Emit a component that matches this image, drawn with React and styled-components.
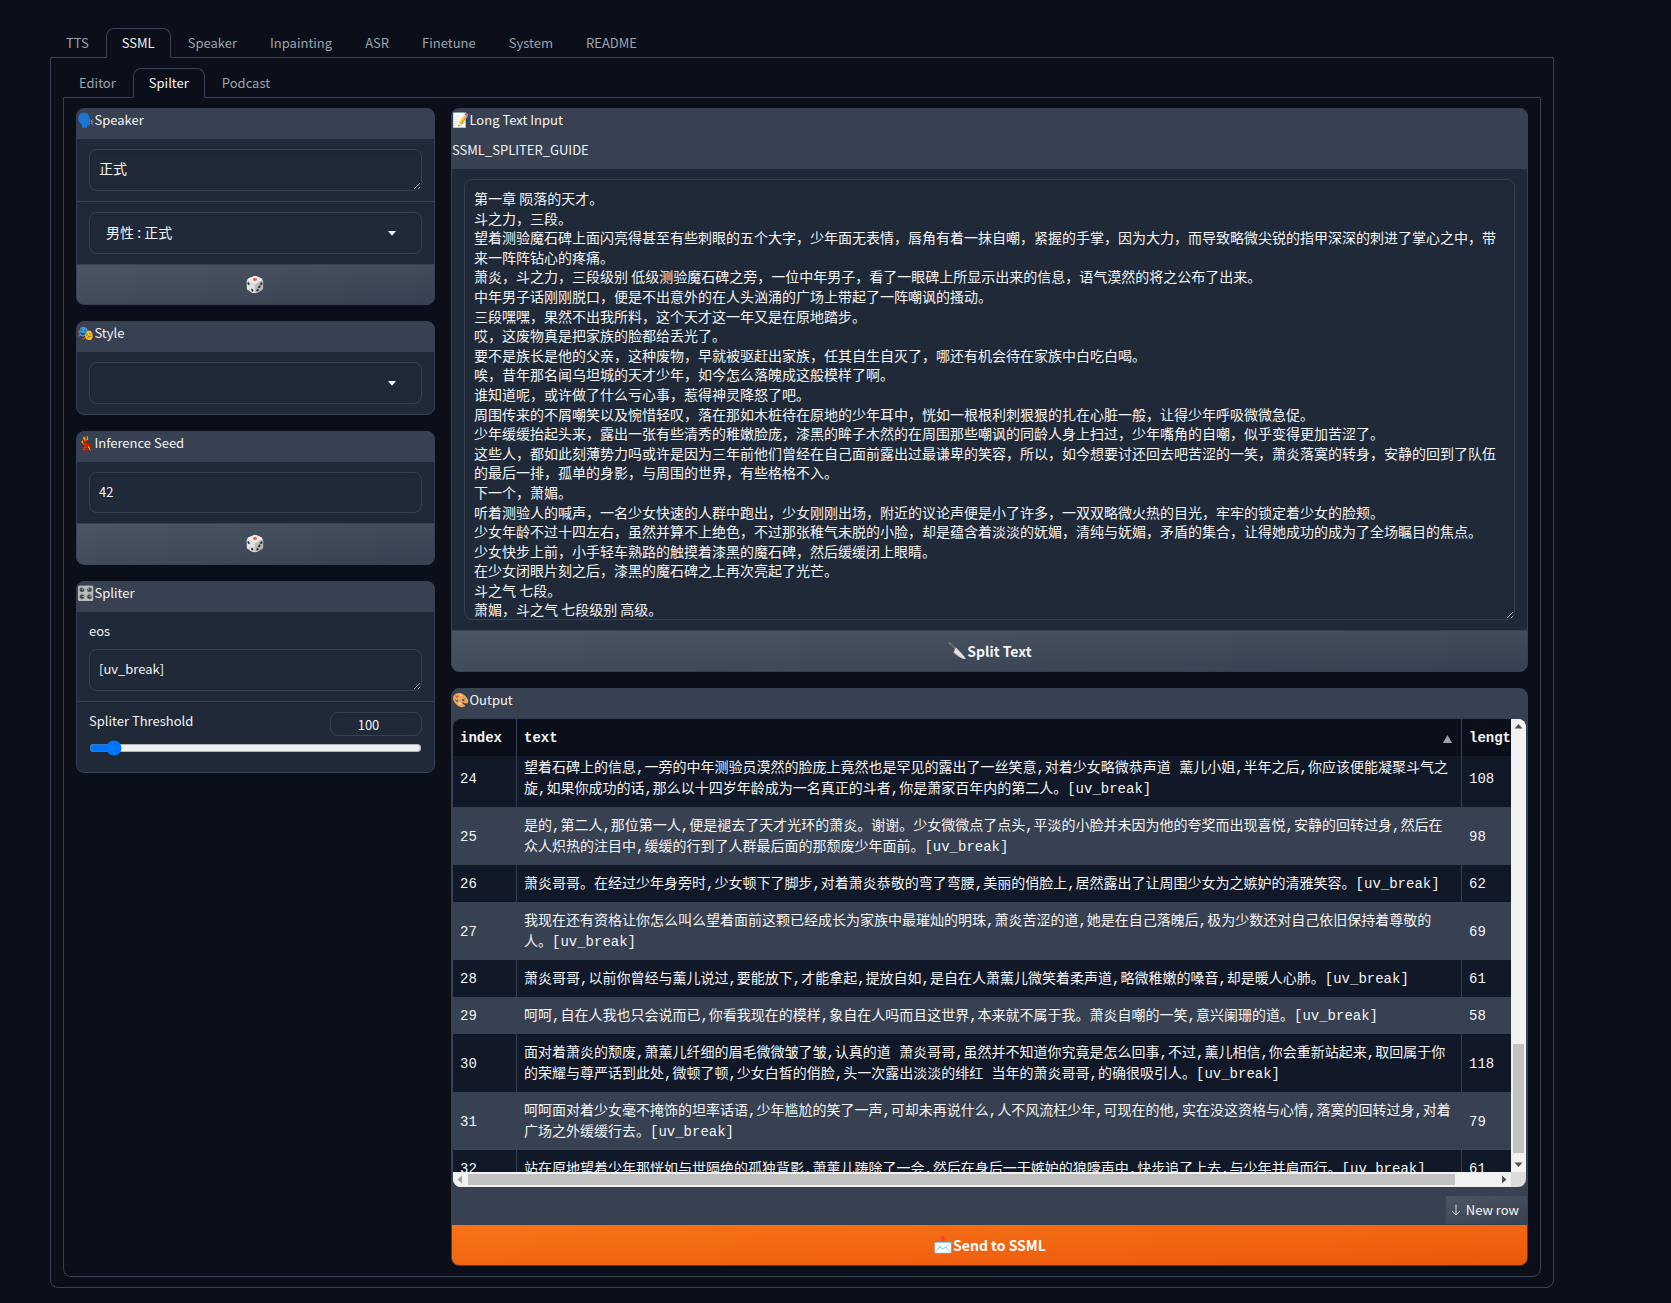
import React, { useLayoutEffect, useRef, useState } from "react";
import styled, { createGlobalStyle } from "styled-components";

const c = {
  page: "#0b0f19",
  block: "#1f2937",
  line: "#374151",
  text: "#f3f4f6",
  muted: "#9ca3af",
  rowDark: "#111827",
};

const sans = `"Noto Sans CJK SC", "Noto Sans", "Noto Color Emoji", sans-serif`;
const mono = `"Liberation Mono", "Noto Sans CJK SC", monospace`;

const GlobalStyle = createGlobalStyle`
  *, *::before, *::after { box-sizing: border-box; }
  body { margin: 0; background: ${c.page}; color: ${c.text}; font: 13px/20px ${sans}; }
  button, input, textarea, select { font: inherit; color: inherit; margin: 0; }
`;

const Page = styled.main`
  padding: 28px 117px 15px 50px;
`;

const TabList = styled.div`
  display: flex;
  gap: 1px;
  position: relative;
  z-index: 1;
  margin-bottom: -1px;
`;

const Tab = styled.button`
  height: 30px;
  padding: 0 15px;
  background: ${(p) => (p.$active ? c.page : "transparent")};
  border: 1px solid ${(p) => (p.$active ? c.line : "transparent")};
  border-bottom-color: ${(p) => (p.$active ? c.page : "transparent")};
  border-radius: 8px 8px 0 0;
  color: ${(p) => (p.$active ? c.text : c.muted)};
  line-height: 20px;
  white-space: nowrap;
  cursor: pointer;
`;

const TabPanel = styled.section`
  padding: 10px 12px;
  border: 1px solid ${c.line};
  border-radius: 0 0 8px 8px;
`;

const Columns = styled.div`
  display: grid;
  grid-template-columns: minmax(0, 1fr) minmax(0, 3fr);
  gap: 16px;
  align-items: start;
`;

const Stack = styled.div`
  display: flex;
  flex-direction: column;
  gap: 16px;
`;

const Group = styled.section`
  display: flex;
  flex-direction: column;
  gap: 1px;
  overflow: hidden;
  border: 1px solid ${c.line};
  border-radius: 8px;
  background: ${c.line};
`;

const Heading = styled.header`
  margin-bottom: -1px;
`;

const HeadingLine = styled.p`
  display: flex;
  align-items: center;
  height: 22px;
  margin: 0 0 8px;
`;

const Emoji = styled.span`
  font-family: "Noto Color Emoji", sans-serif;
  font-size: ${(p) => (p.$large ? 16 : 14)}px;
  font-weight: 400;
`;

const Block = styled.div`
  padding: 10px 12px ${(p) => (p.$roomy ? 16 : 10)}px;
  background: ${c.block};
`;

const Label = styled.label`
  display: block;
  margin-bottom: ${(p) => (p.$inline ? 0 : 10)}px;
  line-height: 17px;
`;

const boxed = `
  display: block;
  width: 100%;
  background: ${c.block};
  border: 1px solid ${c.line};
  border-radius: 8px;
  box-shadow: inset 0 2px 4px 0 rgba(0, 0, 0, 0.05);
  outline: none;
`;

const TextArea = styled.textarea`
  ${boxed}
  height: ${(p) => (p.$tall ? 441 : 42)}px;
  padding: 9px;
  overflow: hidden;
  resize: vertical;
  font-size: ${(p) => (p.$latin ? 13 : 14)}px;
  line-height: ${(p) => (p.$latin ? 1.5 : 1.4)};
`;

const Input = styled.input`
  ${boxed}
  height: 41px;
  padding: 8px 9px 10px;
`;

const SmallNumber = styled.input`
  ${boxed}
  width: 92px;
  height: 24px;
  padding: 0 8px;
  text-align: center;
`;

const SelectWrap = styled.div`
  position: relative;
`;

const Select = styled.select`
  ${boxed}
  height: 42px;
  padding: 0 48px 2px 16px;
  appearance: none;
  font-size: 14px;
`;

const Caret = styled.svg`
  position: absolute;
  top: 19px;
  right: 26px;
  pointer-events: none;
`;

const Button = styled.button`
  display: flex;
  align-items: center;
  justify-content: center;
  height: ${(p) => (p.$tall ? 40 : 39)}px;
  padding: 0 12px;
  border: 0;
  background: ${(p) =>
    p.$primary
      ? "linear-gradient(to bottom right, #f97316, #ea580c)"
      : "linear-gradient(to bottom right, #4b5563, #374151)"};
  color: ${(p) => (p.$primary ? "#fff" : c.text)};
  font-size: 14px;
  font-weight: 700;
  cursor: pointer;
`;

const SliderHead = styled.div`
  display: flex;
  align-items: flex-start;
  justify-content: space-between;
  margin-bottom: 4px;
`;

const Slider = styled.input`
  display: block;
  width: 100%;
  height: 16px;
`;

const TableFrame = styled.div`
  display: grid;
  grid-template-columns: minmax(0, 1fr) 15px;
  grid-template-rows: 453px 15px;
  margin: 0 1px;
  overflow: hidden;
  border-radius: 8px;
  background: #dcdcdc;
`;

const TableView = styled.div`
  overflow: auto;
  scrollbar-width: none;
  background: ${c.page};
`;

const Table = styled.table`
  width: calc(100% + 43px);
  table-layout: fixed;
  border-collapse: separate;
  border-spacing: 0;
  font: 14px/21px ${mono};
`;

const IndexCol = styled.col`
  width: 64px;
`;

const LengthCol = styled.col`
  width: 92px;
`;

const Th = styled.th`
  position: sticky;
  top: 0;
  z-index: 1;
  padding: 9px 9px 7px 7px;
  background: ${c.page};
  border-right: 1px solid ${c.line};
  text-align: left;
  font-weight: 700;
`;

const ThInner = styled.div`
  display: flex;
  align-items: center;
  justify-content: space-between;
`;

const Tr = styled.tr`
  background: ${(p) => (p.$odd ? c.line : c.rowDark)};
`;

const Td = styled.td`
  padding: 9px 9px 7px 7px;
  border-right: 1px solid ${c.line};
  vertical-align: middle;
`;

const Bar = styled.div`
  display: flex;
  flex-direction: ${(p) => (p.$vertical ? "column" : "row")};
  align-items: center;
  background: #f1f1f1;
`;

const Arrow = styled.svg`
  flex: none;
`;

const Track = styled.div`
  display: flex;
  flex-direction: ${(p) => (p.$vertical ? "column" : "row")};
  justify-content: ${(p) => (p.$vertical ? "flex-end" : "flex-start")};
  flex: 1;
  align-self: stretch;
  padding: ${(p) => (p.$vertical ? "0 2px 4px" : "2px 0")};
`;

const Thumb = styled.div`
  flex: 0 0 ${(p) => p.$size};
  background: #c1c1c1;
`;

const Tools = styled.div`
  display: flex;
  justify-content: flex-end;
  padding-top: 8px;
`;

const SmallButton = styled.button`
  display: flex;
  align-items: center;
  gap: 4px;
  height: 28px;
  padding: 0 8px 1px 4px;
  border: 0;
  background: linear-gradient(to bottom right, #4b5563, #374151);
  cursor: pointer;
`;

const mainTabs = ["TTS", "SSML", "Speaker", "Inpainting", "ASR", "Finetune", "System", "README"];
const subTabs = ["Editor", "Spilter", "Podcast"];

const longText = `第一章 陨落的天才。
斗之力，三段。
望着测验魔石碑上面闪亮得甚至有些刺眼的五个大字，少年面无表情，唇角有着一抹自嘲，紧握的手掌，因为大力，而导致略微尖锐的指甲深深的刺进了掌心之中，带来一阵阵钻心的疼痛。
萧炎，斗之力，三段级别 低级测验魔石碑之旁，一位中年男子，看了一眼碑上所显示出来的信息，语气漠然的将之公布了出来。
中年男子话刚刚脱口，便是不出意外的在人头汹涌的广场上带起了一阵嘲讽的搔动。
三段嘿嘿，果然不出我所料，这个天才这一年又是在原地踏步。
哎，这废物真是把家族的脸都给丢光了。
要不是族长是他的父亲，这种废物，早就被驱赶出家族，任其自生自灭了，哪还有机会待在家族中白吃白喝。
唉，昔年那名闻乌坦城的天才少年，如今怎么落魄成这般模样了啊。
谁知道呢，或许做了什么亏心事，惹得神灵降怒了吧。
周围传来的不屑嘲笑以及惋惜轻叹，落在那如木桩待在原地的少年耳中，恍如一根根利刺狠狠的扎在心脏一般，让得少年呼吸微微急促。
少年缓缓抬起头来，露出一张有些清秀的稚嫩脸庞，漆黑的眸子木然的在周围那些嘲讽的同龄人身上扫过，少年嘴角的自嘲，似乎变得更加苦涩了。
这些人，都如此刻薄势力吗或许是因为三年前他们曾经在自己面前露出过最谦卑的笑容，所以，如今想要讨还回去吧苦涩的一笑，萧炎落寞的转身，安静的回到了队伍的最后一排，孤单的身影，与周围的世界，有些格格不入。
下一个，萧媚。
听着测验人的喊声，一名少女快速的人群中跑出，少女刚刚出场，附近的议论声便是小了许多，一双双略微火热的目光，牢牢的锁定着少女的脸颊。
少女年龄不过十四左右，虽然并算不上绝色，不过那张稚气未脱的小脸，却是蕴含着淡淡的妩媚，清纯与妩媚，矛盾的集合，让得她成功的成为了全场瞩目的焦点。
少女快步上前，小手轻车熟路的触摸着漆黑的魔石碑，然后缓缓闭上眼睛。
在少女闭眼片刻之后，漆黑的魔石碑之上再次亮起了光芒。
斗之气 七段。
萧媚，斗之气 七段级别 高级。`;

const rows = [
  [24, "望着石碑上的信息,一旁的中年测验员漠然的脸庞上竟然也是罕见的露出了一丝笑意,对着少女略微恭声道 薰儿小姐,半年之后,你应该便能凝聚斗气之旋,如果你成功的话,那么以十四岁年龄成为一名真正的斗者,你是萧家百年内的第二人。[uv_break]", 108],
  [25, "是的,第二人,那位第一人,便是褪去了天才光环的萧炎。谢谢。少女微微点了点头,平淡的小脸并未因为他的夸奖而出现喜悦,安静的回转过身,然后在众人炽热的注目中,缓缓的行到了人群最后面的那颓废少年面前。[uv_break]", 98],
  [26, "萧炎哥哥。在经过少年身旁时,少女顿下了脚步,对着萧炎恭敬的弯了弯腰,美丽的俏脸上,居然露出了让周围少女为之嫉妒的清雅笑容。[uv_break]", 62],
  [27, "我现在还有资格让你怎么叫么望着面前这颗已经成长为家族中最璀灿的明珠,萧炎苦涩的道,她是在自己落魄后,极为少数还对自己依旧保持着尊敬的人。[uv_break]", 69],
  [28, "萧炎哥哥,以前你曾经与薰儿说过,要能放下,才能拿起,提放自如,是自在人萧薰儿微笑着柔声道,略微稚嫩的嗓音,却是暖人心肺。[uv_break]", 61],
  [29, "呵呵,自在人我也只会说而已,你看我现在的模样,象自在人吗而且这世界,本来就不属于我。萧炎自嘲的一笑,意兴阑珊的道。[uv_break]", 58],
  [30, "面对着萧炎的颓废,萧薰儿纤细的眉毛微微皱了皱,认真的道 萧炎哥哥,虽然并不知道你究竟是怎么回事,不过,薰儿相信,你会重新站起来,取回属于你的荣耀与尊严话到此处,微顿了顿,少女白皙的俏脸,头一次露出淡淡的绯红 当年的萧炎哥哥,的确很吸引人。[uv_break]", 118],
  [31, "呵呵面对着少女毫不掩饰的坦率话语,少年尴尬的笑了一声,可却未再说什么,人不风流枉少年,可现在的他,实在没这资格与心情,落寞的回转过身,对着广场之外缓缓行去。[uv_break]", 79],
  [32, "站在原地望着少年那恍如与世隔绝的孤独背影,萧薰儿踌除了一会,然后在身后一干嫉妒的狼嚎声中,快步追了上去,与少年并肩而行。[uv_break]", 61],
];

function Tabs({ items, initial, label }) {
  const [active, setActive] = useState(initial);
  return (
    <TabList role="tablist" aria-label={label}>
      {items.map((item) => (
        <Tab
          key={item}
          type="button"
          role="tab"
          aria-selected={item === active}
          $active={item === active}
          onClick={() => setActive(item)}
        >
          {item}
        </Tab>
      ))}
    </TabList>
  );
}

function Title({ emoji, children, note }) {
  return (
    <Heading>
      <HeadingLine>
        <Emoji>{emoji}</Emoji>
        {children}
      </HeadingLine>
      {note && <HeadingLine>{note}</HeadingLine>}
    </Heading>
  );
}

function Dropdown({ label, options }) {
  return (
    <SelectWrap>
      <Select aria-label={label}>
        {options.map((o) => (
          <option key={o}>{o}</option>
        ))}
      </Select>
      <Caret width="8" height="5" viewBox="0 0 8 5" aria-hidden="true">
        <path d="M0 0h8L4.6 4.1a.8.8 0 0 1-1.2 0z" fill="#fff" />
      </Caret>
    </SelectWrap>
  );
}

const arrowPaths = {
  up: "M3.5 9.5h8L7.5 5z",
  down: "M3.5 5.5h8L7.5 10z",
  left: "M9 3.5v8L4.5 7.5z",
  right: "M6 3.5v8l4.5-4z",
};

function ScrollArrow({ dir, color = "#505050" }) {
  return (
    <Arrow width="15" height="15" viewBox="0 0 15 15" aria-hidden="true">
      <path d={arrowPaths[dir]} fill={color} />
    </Arrow>
  );
}

function OutputTable() {
  const view = useRef(null);
  useLayoutEffect(() => {
    view.current.scrollTop = 7;
  }, []);
  return (
    <TableFrame>
      <TableView ref={view}>
        <Table>
          <colgroup>
            <IndexCol />
            <col />
            <LengthCol />
          </colgroup>
          <thead>
            <tr>
              <Th scope="col">index</Th>
              <Th scope="col" aria-sort="ascending">
                <ThInner>
                  text
                  <svg width="9" height="8" viewBox="0 0 9 8" aria-hidden="true">
                    <path d="M4.5 0L9 8H0z" fill={c.muted} />
                  </svg>
                </ThInner>
              </Th>
              <Th scope="col">length</Th>
            </tr>
          </thead>
          <tbody>
            {rows.map(([index, text, length], i) => (
              <Tr key={index} $odd={i % 2 === 1}>
                <Td>{index}</Td>
                <Td>{text}</Td>
                <Td>{length}</Td>
              </Tr>
            ))}
          </tbody>
        </Table>
      </TableView>
      <Bar $vertical>
        <ScrollArrow dir="up" />
        <Track $vertical>
          <Thumb $size="109px" />
        </Track>
        <ScrollArrow dir="down" />
      </Bar>
      <Bar>
        <ScrollArrow dir="left" color="#a3a3a3" />
        <Track>
          <Thumb $size="96%" />
        </Track>
        <ScrollArrow dir="right" />
      </Bar>
    </TableFrame>
  );
}

export default function App() {
  return (
    <Page>
      <GlobalStyle />
      <Tabs items={mainTabs} initial="SSML" label="Sections" />
      <TabPanel>
        <Tabs items={subTabs} initial="Spilter" label="SSML tools" />
        <TabPanel>
          <Columns>
            <Stack>
              <Group>
                <Title emoji="🗣️">Speaker</Title>
                <Block>
                  <TextArea aria-label="Speaker name" defaultValue="正式" />
                </Block>
                <Block>
                  <Dropdown label="Speaker" options={["男性 : 正式"]} />
                </Block>
                <Button type="button" aria-label="Random speaker">
                  <Emoji $large>🎲</Emoji>
                </Button>
              </Group>

              <Group>
                <Title emoji="🎭">Style</Title>
                <Block>
                  <Dropdown label="Style" options={[""]} />
                </Block>
              </Group>

              <Group>
                <Title emoji="💃">Inference Seed</Title>
                <Block>
                  <Input aria-label="Inference seed" type="number" defaultValue="42" />
                </Block>
                <Button type="button" $tall aria-label="Random seed">
                  <Emoji $large>🎲</Emoji>
                </Button>
              </Group>

              <Group>
                <Title emoji="🎛️">Spliter</Title>
                <Block>
                  <Label htmlFor="eos">eos</Label>
                  <TextArea id="eos" $latin defaultValue="[uv_break]" />
                </Block>
                <Block $roomy>
                  <SliderHead>
                    <Label $inline htmlFor="threshold">Spliter Threshold</Label>
                    <SmallNumber aria-label="Spliter threshold value" type="number" defaultValue="100" />
                  </SliderHead>
                  <Slider id="threshold" type="range" min="50" max="1000" defaultValue="100" />
                </Block>
              </Group>
            </Stack>

            <Stack>
              <Group>
                <Title emoji="📝" note="SSML_SPLITER_GUIDE">Long Text Input</Title>
                <Block>
                  <TextArea $tall aria-label="Long text" spellCheck={false} defaultValue={longText} />
                </Block>
                <Button type="button" $tall>
                  <Emoji $large>🔪</Emoji>
                  Split Text
                </Button>
              </Group>

              <Group>
                <Title emoji="🎨">Output</Title>
                <OutputTable />
                <Tools>
                  <SmallButton type="button">
                    <svg width="12" height="12" viewBox="0 0 12 12" fill="none" stroke="#d1d5db" aria-hidden="true">
                      <path d="M6 0.5v10.5M2 7l4 4 4-4" />
                    </svg>
                    New row
                  </SmallButton>
                </Tools>
                <Button type="button" $primary $tall>
                  <Emoji $large>📩</Emoji>
                  Send to SSML
                </Button>
              </Group>
            </Stack>
          </Columns>
        </TabPanel>
      </TabPanel>
    </Page>
  );
}
